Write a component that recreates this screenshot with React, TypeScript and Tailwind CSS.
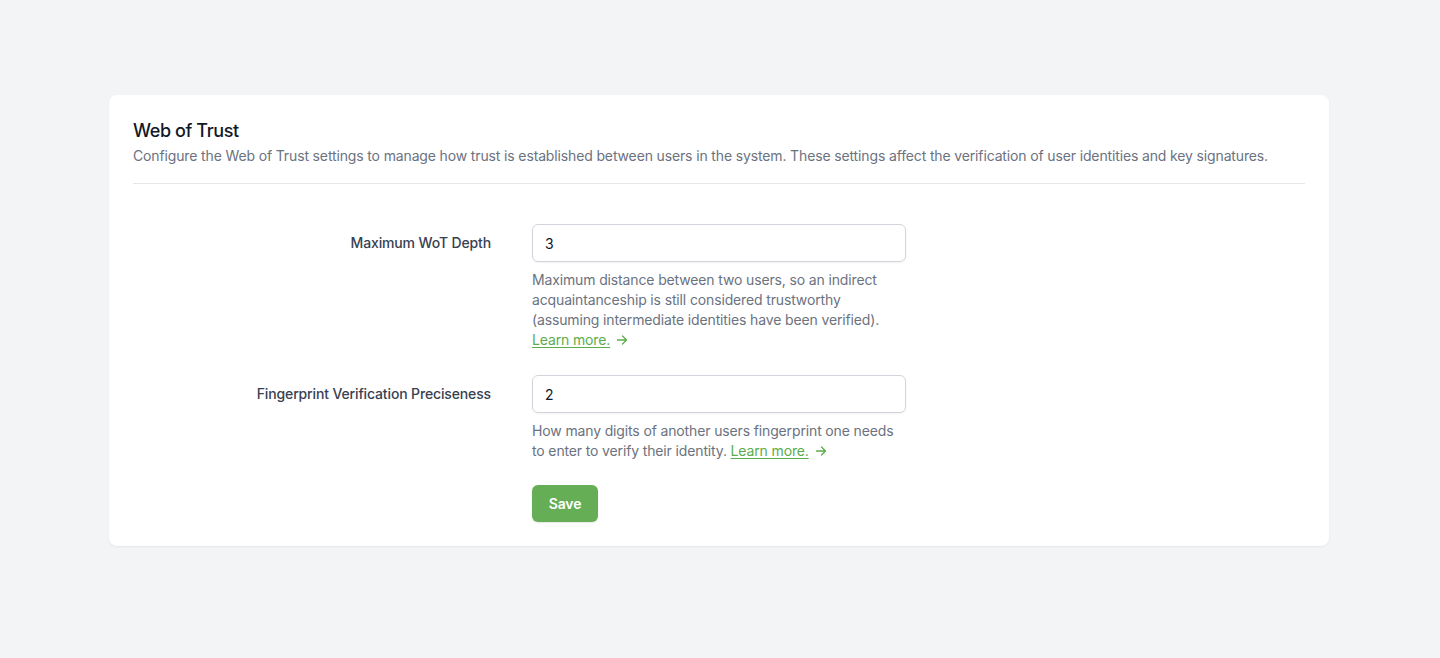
import React from "react";

function Arrow() {
  return (
    <svg className="inline-block ml-1.5 h-3 w-3 align-[-1px]" viewBox="0 0 12 12" fill="none" stroke="currentColor" strokeWidth="1.3" strokeLinecap="round" strokeLinejoin="round">
      <path d="M1.5 6h9M6.5 2l4 4-4 4" />
    </svg>
  );
}

function Learn() {
  return (
    <span className="text-[#5cad4a] whitespace-nowrap">
      <a href="#" className="underline underline-offset-2 decoration-1">Learn more.</a>
      <Arrow />
    </span>
  );
}

export default function App() {
  return (
    <div className="min-h-[658px] bg-[#f3f4f6] pt-[95px] px-[109px] tracking-[-0.14px]" style={{ fontFamily: "Inter, 'Noto Sans', sans-serif" }}>
      <div className="w-[1220px] bg-white rounded-lg shadow-[0_1px_2px_rgba(0,0,0,0.06)] px-6 pt-[23px] pb-6">
        <h2 className="text-[18px] leading-[26px] font-medium text-[#111827] tracking-[-0.4px]">Web of Trust</h2>
        <p className="mt-[2px] text-[14px] leading-5 text-[#6b7280]">
          Configure the Web of Trust settings to manage how trust is established between users in the system. These settings affect the verification of user identities and key signatures.
        </p>
        <div className="mt-[17px] border-t border-[#e5e7eb]" />
        <div className="mt-10 flex flex-col gap-[25px]">
          <div className="flex">
            <label className="w-[358px] text-right text-[14px] leading-[38px] font-medium text-[#374151]">Maximum WoT Depth</label>
            <div className="ml-[41px] w-[374px]">
              <input defaultValue="3" className="w-full h-[38px] rounded-md border border-[#d1d5db] px-3 text-[14px] text-[#111827] shadow-[0_1px_2px_rgba(0,0,0,0.05)] outline-none" />
              <p className="mt-2 text-[14px] leading-5 text-[#6b7280]">
                Maximum distance between two users, so an indirect acquaintanceship is still considered trustworthy (assuming intermediate identities have been verified). <br />
                <Learn />
              </p>
            </div>
          </div>
          <div className="flex">
            <label className="w-[358px] text-right text-[14px] leading-[38px] font-medium text-[#374151]">Fingerprint Verification Preciseness</label>
            <div className="ml-[41px] w-[374px]">
              <input defaultValue="2" className="w-full h-[38px] rounded-md border border-[#d1d5db] px-3 text-[14px] text-[#111827] shadow-[0_1px_2px_rgba(0,0,0,0.05)] outline-none" />
              <p className="mt-2 text-[14px] leading-5 text-[#6b7280]">
                How many digits of another users fingerprint one needs to enter to verify their identity. <Learn />
              </p>
              <button className="mt-[24px] h-[37px] w-[66px] rounded-md bg-[#65ae55] text-white text-[14px] font-semibold shadow-[0_1px_2px_rgba(0,0,0,0.1)]">Save</button>
            </div>
          </div>
        </div>
      </div>
    </div>
  );
}
